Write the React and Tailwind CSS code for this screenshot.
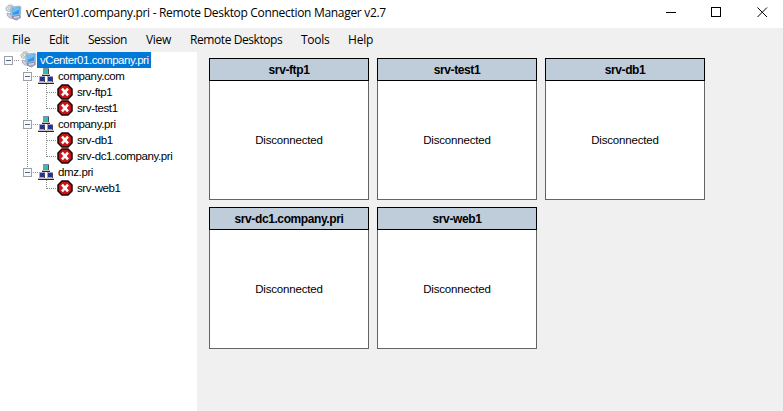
import React from "react";

const UI = "font-['Open_Sans','Noto_Sans',sans-serif]";
const SANS = "font-['Liberation_Sans',Arial,sans-serif]";

const TREE = [
  { level: 0, label: "vCenter01.company.pri" },
  { level: 1, label: "company.com", more: true },
  { level: 2, label: "srv-ftp1", more: true, next: true },
  { level: 2, label: "srv-test1", more: true },
  { level: 1, label: "company.pri", more: true },
  { level: 2, label: "srv-db1", more: true, next: true },
  { level: 2, label: "srv-dc1.company.pri", more: true },
  { level: 1, label: "dmz.pri" },
  { level: 2, label: "srv-web1" },
];

const SERVERS = ["srv-ftp1", "srv-test1", "srv-db1", "srv-dc1.company.pri", "srv-web1"];

const MENU = [
  ["File", "w-[37px] tracking-[-0.2px]"],
  ["Edit", "w-[39px] tracking-[-0.4px]"],
  ["Session", "w-[58px] tracking-[-0.5px]"],
  ["View", "w-[44px] tracking-[-0.3px]"],
  ["Remote Desktops", "w-[111px] tracking-[-0.42px]"],
  ["Tools", "w-[47px] tracking-[-0.3px]"],
  ["Help", "w-[40px] tracking-[-0.2px]"],
];

function ManagerIcon({ className }) {
  return (
    <svg className={className} width="17" height="17" viewBox="0 0 17 17">
      <path d="M.8 4 3 1.5 6.5 .8 8.5 2.5 7 6 4 7.5 1.5 6.5Z" fill="#dfe2e2" stroke="#969c9d" strokeWidth=".7" />
      <path d="M3 3.5 5.5 2.5 6 4.5 4 5.5Z" fill="#fff" stroke="#8d9494" strokeWidth=".5" />
      <path d="M2 9 6 10 8 14.5 5 14 2.5 12Z" fill="#cdd0da" stroke="#949aad" strokeWidth=".7" />
      <path d="M6 3 14.5 2 16 3 15.5 11 8 12.5 5.5 10.5Z" fill="#9bc4e7" stroke="#7fa6ca" strokeWidth=".6" />
      <path d="M7.5 4.3 14.7 3.3 14.2 10 7.5 11Z" fill="#3b96df" />
      <path d="M7.5 4.3 14.7 3.3 14.5 5.6 7.5 9Z" fill="#70bdf0" />
      <path d="M7 12.5 15 11.3 15.5 13.5 11.5 16 8.5 15Z" fill="#a5a9c5" stroke="#777aa2" strokeWidth=".7" />
      <path d="M9 13.3 14 12.7" stroke="#e7eaf4" />
    </svg>
  );
}

function Computer({ x, y, screen, frame }) {
  return (
    <g transform={`translate(${x} ${y})`} shapeRendering="crispEdges">
      <rect x="1" y="0" width="6" height="6" fill={frame} />
      <rect x="2" y="1" width="4" height="4" fill={screen} />
      <rect x="6" y="1" width="1" height="5" fill="#45495a" />
      <rect x="0" y="6" width="8" height="1" fill="#c9c8b4" />
      <rect x="0" y="7" width="8" height="1" fill="#26262a" />
    </g>
  );
}

function GroupIcon() {
  return (
    <svg className="block" width="16" height="16" viewBox="0 0 16 16">
      <Computer x={4} y={0} screen="#3cb8ba" frame="#7b9496" />
      <Computer x={0} y={8} screen="#2a2f9e" frame="#a3a8c8" />
      <Computer x={8} y={8} screen="#2a2f9e" frame="#a3a8c8" />
    </svg>
  );
}

function ErrorIcon() {
  return (
    <svg className="block" width="16" height="16" viewBox="0 0 16 16">
      <path d="M5 1H11L15 5V11L11 15H5L1 11V5Z" fill="#cc1418" stroke="#1c0505" strokeWidth="1.5" />
      <path d="M5 4.7 11 11.3M11 4.7 5 11.3" stroke="#fff" strokeWidth="2.6" />
    </svg>
  );
}

const GUIDE_WIDTH = [20, 38, 57];

function Guides({ level, more, next }) {
  const box = level === 0 ? 4 : 23;
  return (
    <svg
      className="shrink-0"
      width={GUIDE_WIDTH[level]}
      height="16"
      shapeRendering="crispEdges"
      fill="none"
      stroke="#8a8a8a"
      strokeDasharray="1 1"
    >
      {level === 0 && <path d="M14 8.5H20" />}
      {level === 1 && <path d={`M33 8.5H38M27.5 0V4${more ? "M27.5 14V16" : ""}`} />}
      {level === 2 && (
        <path d={`M46.5 0V${next ? 16 : 9}M47 8.5H57${more ? "M27.5 0V16" : ""}`} />
      )}
      {level < 2 && (
        <g strokeDasharray="none">
          <rect x={box + 0.5} y="4.5" width="8" height="8" fill="#fafafa" stroke="#a0a0a0" />
          <path d={`M${box + 2} 8.5H${box + 7}`} stroke="#4c62a5" />
        </g>
      )}
    </svg>
  );
}

function TreeRow({ node }) {
  const root = node.level === 0;
  return (
    <div className="flex h-4 items-center">
      <Guides {...node} />
      {root ? (
        <ManagerIcon className="-mt-px shrink-0" />
      ) : (
        <span className="w-4 shrink-0">{node.level === 1 ? <GroupIcon /> : <ErrorIcon />}</span>
      )}
      <span
        className={
          root
            ? "h-4 w-[114px] whitespace-nowrap bg-[#0078d7] pl-[3px] text-[11.5px] leading-[16px] tracking-[-0.45px] text-white"
            : "whitespace-nowrap pl-1 text-[11.5px] leading-[16px] tracking-[-0.38px]"
        }
      >
        {node.label}
      </span>
    </div>
  );
}

function ServerCard({ name }) {
  return (
    <div className="flex h-[142px] w-[160px] flex-col">
      <div className="flex h-[23px] shrink-0 items-center justify-center border border-black bg-[#bfccda] text-[12px] font-bold leading-none tracking-[-0.4px]">
        {name}
      </div>
      <div className="flex flex-1 items-center justify-center border border-t-0 border-[#646464] bg-white pt-[2px] text-[11.5px] tracking-[-0.18px]">
        Disconnected
      </div>
    </div>
  );
}

export default function App() {
  return (
    <div className={`flex h-[411px] w-[783px] flex-col overflow-hidden bg-[#f0f0f0] text-black ${SANS}`}>
      <header className={`flex h-7 shrink-0 items-center bg-white ${UI}`}>
        <ManagerIcon className="-mt-1 ml-[5px] shrink-0" />
        <h1 className="-mt-[2px] ml-1 whitespace-nowrap text-[12px] leading-4 tracking-[-0.31px]">
          vCenter01.company.pri - Remote Desktop Connection Manager v2.7
        </h1>
        <svg className="ml-auto mr-[15px] shrink-0" width="102" height="24" fill="none" stroke="#000">
          <path d="M0 10.5H10" />
          <rect x="45.5" y="5.5" width="9" height="9" />
          <path d="M91.5 5.5 101 15M101 5.5 91.5 15" />
        </svg>
      </header>
      <nav className={`flex h-6 shrink-0 items-center pl-3 text-[12px] ${UI}`}>
        {MENU.map(([label, cls]) => (
          <button key={label} className={`whitespace-nowrap text-left ${cls}`}>
            {label}
          </button>
        ))}
      </nav>
      <main className="flex min-h-0 flex-1">
        <aside className="w-[197px] shrink-0 bg-white">
          {TREE.map((node) => (
            <TreeRow key={node.label} node={node} />
          ))}
        </aside>
        <section className="grid grid-cols-[160px_160px_160px] content-start gap-x-2 gap-y-[7px] pl-3 pt-[6px]">
          {SERVERS.map((name) => (
            <ServerCard key={name} name={name} />
          ))}
        </section>
      </main>
    </div>
  );
}
